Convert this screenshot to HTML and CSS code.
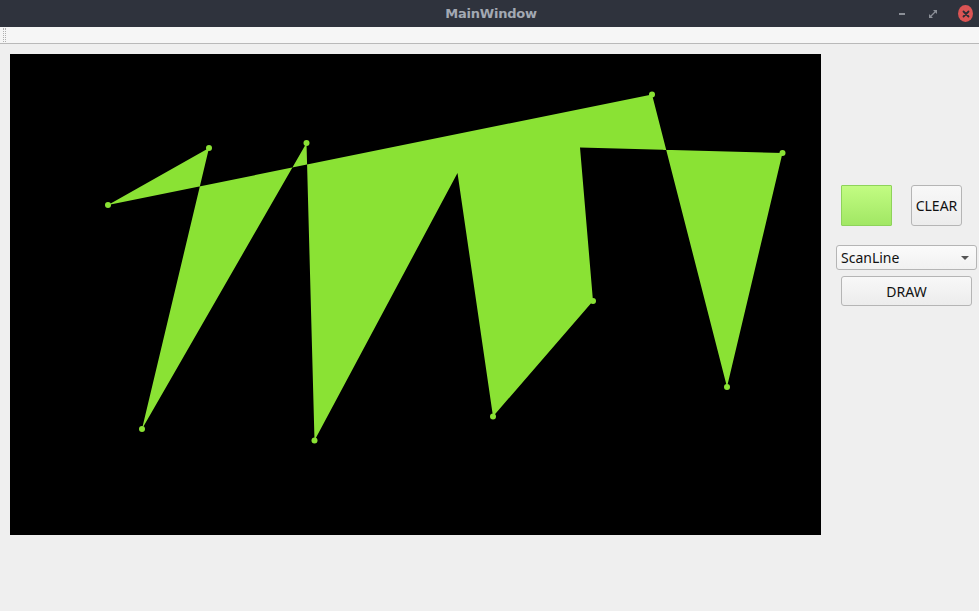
FILE: index.html
```html
<!DOCTYPE html>
<html>
<head>
<meta charset="utf-8">
<link rel="stylesheet" href="styles.css">
</head>
<body>
<div class="window">
  <div class="titlebar">
    <span class="title">MainWindow</span>
    <div class="controls">
      <span class="ctl-min"></span>
      <svg class="ctl-restore" width="8" height="8" viewBox="0 0 8 8"><path d="M0 8 L0 4 L4 8 Z M8 0 L8 4 L4 0 Z" fill="#8b8f97"/><path d="M1 7 L7 1" stroke="#8b8f97" stroke-width="1.2"/></svg>
      <span class="ctl-close"><svg width="8" height="8" viewBox="0 0 8 8"><path d="M1.5 1.5 L6.5 6.5 M6.5 1.5 L1.5 6.5" stroke="#2b2e36" stroke-width="1.8" stroke-linecap="round"/></svg></span>
    </div>
  </div>
  <div class="menubar"><span class="grip"></span></div>
  <div class="main">
    <svg class="canvas" width="811" height="481" viewBox="10 54 811 481">
      <rect x="10" y="54" width="811" height="481" fill="#000"/>
      <polygon fill="#8ae234" fill-rule="evenodd" points="108,205 209,148 142,429 306.5,143 314.5,440.5 457.5,173 493,416.5 593,301 580,147.5 782.5,153 727,387 652,94.5"/>
      <g fill="#8ae234">
        <circle cx="108" cy="205" r="3"/>
        <circle cx="209" cy="148" r="3"/>
        <circle cx="142" cy="429" r="3"/>
        <circle cx="306.5" cy="143" r="3"/>
        <circle cx="314.5" cy="440.5" r="3"/>
        <circle cx="493" cy="416.5" r="3"/>
        <circle cx="593" cy="301" r="3"/>
        <circle cx="782.5" cy="153" r="3"/>
        <circle cx="727" cy="387" r="3"/>
        <circle cx="652" cy="94.5" r="3"/>
      </g>
    </svg>
    <div class="panel">
      <div class="row">
        <div class="swatch"></div>
        <button class="btn clear">CLEAR</button>
      </div>
      <div class="combo"><span>ScanLine</span><span class="arrow"></span></div>
      <button class="btn draw">DRAW</button>
    </div>
  </div>
</div>
</body>
</html>
```
FILE: styles.css
```css
html, body {
  margin: 0;
  padding: 0;
  width: 979px;
  height: 611px;
  overflow: hidden;
  background: #efefef;
  font-family: "Noto Sans", "DejaVu Sans", sans-serif;
}
.window {
  width: 979px;
  height: 611px;
  display: flex;
  flex-direction: column;
}
.titlebar {
  height: 27px;
  background: #2f333d;
  display: flex;
  align-items: center;
  justify-content: center;
  position: relative;
}
.title {
  color: #a3a9b3;
  font-family: "DejaVu Sans", sans-serif;
  font-weight: bold;
  font-size: 13px;
  letter-spacing: -0.2px;
  margin-left: 3px;
}
.controls {
  position: absolute;
  right: 6px;
  top: 0;
  height: 27px;
  display: flex;
  align-items: center;
}
.ctl-min {
  width: 6px;
  height: 2px;
  background: #8b8f97;
  margin-right: 24px;
  margin-top: 1px;
}
.ctl-restore {
  margin-right: 21px;
}
.ctl-close {
  width: 15px;
  height: 17px;
  border-radius: 50%;
  background: #db5454;
  display: flex;
  align-items: center;
  justify-content: center;
}
.menubar {
  height: 16px;
  background: #f6f6f6;
  border-bottom: 1px solid #b9b9b9;
  position: relative;
}
.grip {
  position: absolute;
  left: 3px;
  top: 1px;
  width: 3px;
  height: 14px;
  border-left: 1px dotted #b0b0b0;
  border-right: 1px dotted #b0b0b0;
  box-sizing: border-box;
}
.main {
  display: flex;
  padding: 10px 0 0 10px;
}
.canvas {
  display: block;
  flex: none;
}
.panel {
  display: flex;
  flex-direction: column;
  margin-left: 15px;
  padding-top: 131px;
}
.row {
  display: flex;
  margin-left: 5px;
  gap: 19px;
}
.swatch {
  width: 49px;
  height: 39px;
  border: 1px solid #8ed35a;
  background: linear-gradient(#c2fc82, #a1e764);
  border-radius: 1px;
}
.btn {
  font-family: "Noto Sans", "DejaVu Sans", sans-serif;
  font-size: 14px;
  color: #111;
  background: linear-gradient(#f8f8f8, #ececec);
  border: 1px solid #b5b5b5;
  border-radius: 3px;
  padding: 0;
  box-sizing: border-box;
}
.clear {
  width: 51px;
  height: 41px;
}
.combo {
  margin-top: 19px;
  width: 141px;
  height: 25px;
  box-sizing: border-box;
  border: 1px solid #b5b5b5;
  border-radius: 3px;
  background: linear-gradient(#fbfbfb, #f1f1f1);
  display: flex;
  align-items: center;
  justify-content: space-between;
  padding: 0 7px 0 4px;
  font-size: 14px;
  color: #111;
}
.arrow {
  width: 0;
  height: 0;
  border-left: 4px solid transparent;
  border-right: 4px solid transparent;
  border-top: 4px solid #555;
}
.draw {
  margin-top: 6px;
  margin-left: 5px;
  width: 131px;
  height: 30px;
}
```
